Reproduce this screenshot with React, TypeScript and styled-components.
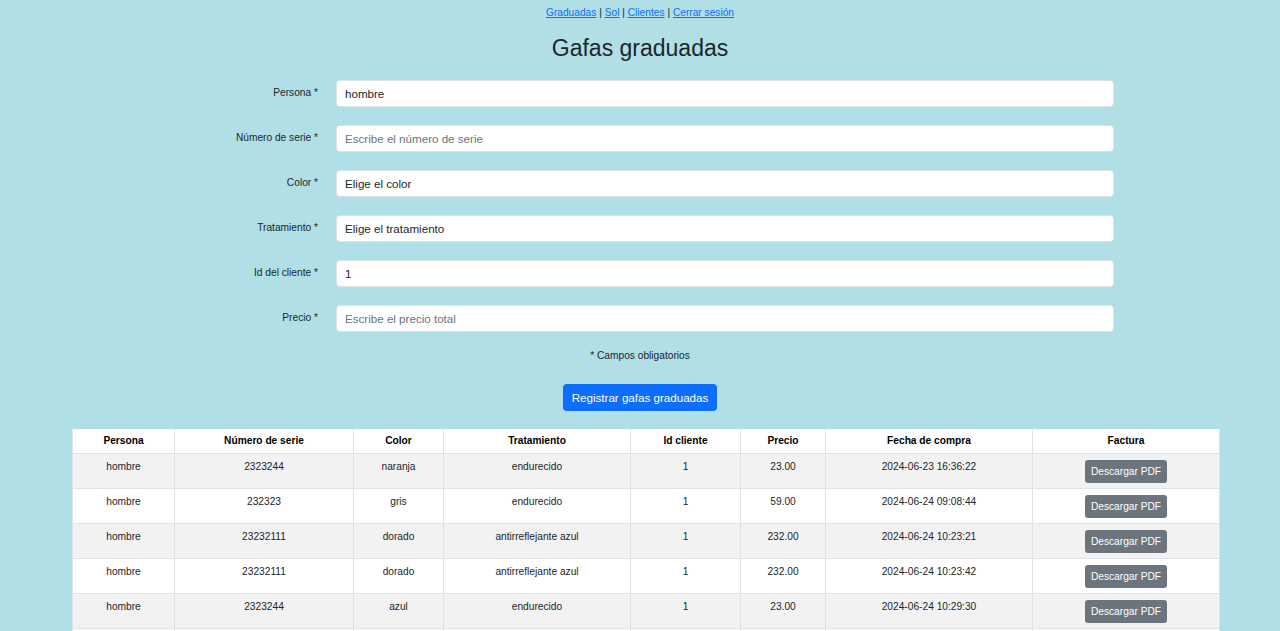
import { Fragment } from "react";
import styled, { createGlobalStyle } from "styled-components";

type Compra = {
  persona: string;
  serie: string;
  color: string;
  tratamiento: string;
  cliente: number;
  precio: string;
  fecha: string;
};

const compras: Compra[] = [
  { persona: "hombre", serie: "2323244", color: "naranja", tratamiento: "endurecido", cliente: 1, precio: "23.00", fecha: "2024-06-23 16:36:22" },
  { persona: "hombre", serie: "232323", color: "gris", tratamiento: "endurecido", cliente: 1, precio: "59.00", fecha: "2024-06-24 09:08:44" },
  { persona: "hombre", serie: "23232111", color: "dorado", tratamiento: "antirreflejante azul", cliente: 1, precio: "232.00", fecha: "2024-06-24 10:23:21" },
  { persona: "hombre", serie: "23232111", color: "dorado", tratamiento: "antirreflejante azul", cliente: 1, precio: "232.00", fecha: "2024-06-24 10:23:42" },
  { persona: "hombre", serie: "2323244", color: "azul", tratamiento: "endurecido", cliente: 1, precio: "23.00", fecha: "2024-06-24 10:29:30" },
  { persona: "hombre", serie: "2323244", color: "azul", tratamiento: "endurecido", cliente: 1, precio: "23.00", fecha: "2024-06-24 10:31:02" },
];

const campos = [
  { label: "Persona *", value: "hombre" },
  { label: "Número de serie *", placeholder: "Escribe el número de serie" },
  { label: "Color *", value: "Elige el color" },
  { label: "Tratamiento *", value: "Elige el tratamiento" },
  { label: "Id del cliente *", value: "1" },
  { label: "Precio *", placeholder: "Escribe el precio total" },
];

const columnas = [
  { titulo: "Persona", ancho: 102 },
  { titulo: "Número de serie", ancho: 179 },
  { titulo: "Color", ancho: 90 },
  { titulo: "Tratamiento", ancho: 187 },
  { titulo: "Id cliente", ancho: 110 },
  { titulo: "Precio", ancho: 85 },
  { titulo: "Fecha de compra", ancho: 207 },
  { titulo: "Factura", ancho: 187 },
];

const GlobalStyle = createGlobalStyle`
  html, body {
    margin: 0;
    padding: 0;
    background: #b0dfe5;
    font-family: "Liberation Sans", Arial, sans-serif;
    color: #212529;
    overflow: hidden;
  }
`;

const Page = styled.div`
  display: flex;
  flex-direction: column;
  align-items: center;
  padding-top: 6px;
`;

const Nav = styled.nav`
  font-size: 10.2px;
  line-height: 13px;
  color: #212529;

  a {
    color: #0d6efd;
    text-decoration: underline;
  }
`;

const Title = styled.h1`
  margin: 15px 0 0;
  font-size: 23px;
  font-weight: 400;
  line-height: 28px;
`;

const Form = styled.form`
  align-self: flex-start;
  display: grid;
  grid-template-columns: 318px 778px;
  column-gap: 18px;
  row-gap: 18px;
  margin-top: 18px;
`;

const Label = styled.label`
  text-align: right;
  font-size: 10.2px;
  line-height: 13px;
  padding-top: 6px;
  color: #212529;
`;

const Input = styled.input`
  box-sizing: border-box;
  height: 27px;
  width: 100%;
  border: 1px solid #dee2e6;
  border-radius: 4px;
  background: #fff;
  padding: 0 8px;
  font-family: inherit;
  font-size: 11.6px;
  color: #212529;

  &::placeholder {
    color: #6c757d;
  }
`;

const Nota = styled.p`
  margin: 17px 0 0;
  font-size: 10.2px;
  line-height: 13px;
`;

const Registrar = styled.button`
  margin-top: 22px;
  height: 27px;
  padding: 0 9px;
  border: none;
  border-radius: 4px;
  background: #0d6efd;
  color: #fff;
  font-family: inherit;
  font-size: 11.6px;
`;

const Table = styled.table`
  align-self: flex-start;
  margin: 18px 0 0 72px;
  width: 1147px;
  table-layout: fixed;
  border-collapse: collapse;
  background: #fff;
  font-size: 10.2px;
`;

const Th = styled.th`
  height: 24px;
  box-sizing: border-box;
  padding: 0 6px;
  border: 1px solid #dee2e6;
  border-top: none;
  font-weight: 700;
  color: #000;
  text-align: center;
  vertical-align: middle;
`;

const Row = styled.tr<{ $striped: boolean }>`
  background: ${(p) => (p.$striped ? "#f2f2f2" : "#fff")};
`;

const Td = styled.td`
  height: 35px;
  box-sizing: border-box;
  padding: 6px 6px 0;
  border: 1px solid #dee2e6;
  text-align: center;
  vertical-align: top;
  line-height: 13px;
  color: #212529;
`;

const Descargar = styled.button`
  height: 23px;
  padding: 0 6px;
  border: none;
  border-radius: 3px;
  background: #6c757d;
  color: #fff;
  font-family: inherit;
  font-size: 10.2px;
`;

export default function App() {
  return (
    <>
      <GlobalStyle />
      <Page>
        <Nav>
          <a href="#">Graduadas</a> | <a href="#">Sol</a> | <a href="#">Clientes</a> |{" "}
          <a href="#">Cerrar sesión</a>
        </Nav>
        <Title>Gafas graduadas</Title>
        <Form onSubmit={(e) => e.preventDefault()}>
          {campos.map((c) => (
            <Fragment key={c.label}>
              <Label>{c.label}</Label>
              <Input defaultValue={c.value} placeholder={c.placeholder} />
            </Fragment>
          ))}
        </Form>
        <Nota>* Campos obligatorios</Nota>
        <Registrar type="button">Registrar gafas graduadas</Registrar>
        <Table>
          <colgroup>
            {columnas.map((c) => (
              <col key={c.titulo} style={{ width: c.ancho }} />
            ))}
          </colgroup>
          <thead>
            <tr>
              {columnas.map((c) => (
                <Th key={c.titulo}>{c.titulo}</Th>
              ))}
            </tr>
          </thead>
          <tbody>
            {compras.map((c, i) => (
              <Row key={i} $striped={i % 2 === 0}>
                <Td>{c.persona}</Td>
                <Td>{c.serie}</Td>
                <Td>{c.color}</Td>
                <Td>{c.tratamiento}</Td>
                <Td>{c.cliente}</Td>
                <Td>{c.precio}</Td>
                <Td>{c.fecha}</Td>
                <Td>
                  <Descargar type="button">Descargar PDF</Descargar>
                </Td>
              </Row>
            ))}
          </tbody>
        </Table>
      </Page>
    </>
  );
}
